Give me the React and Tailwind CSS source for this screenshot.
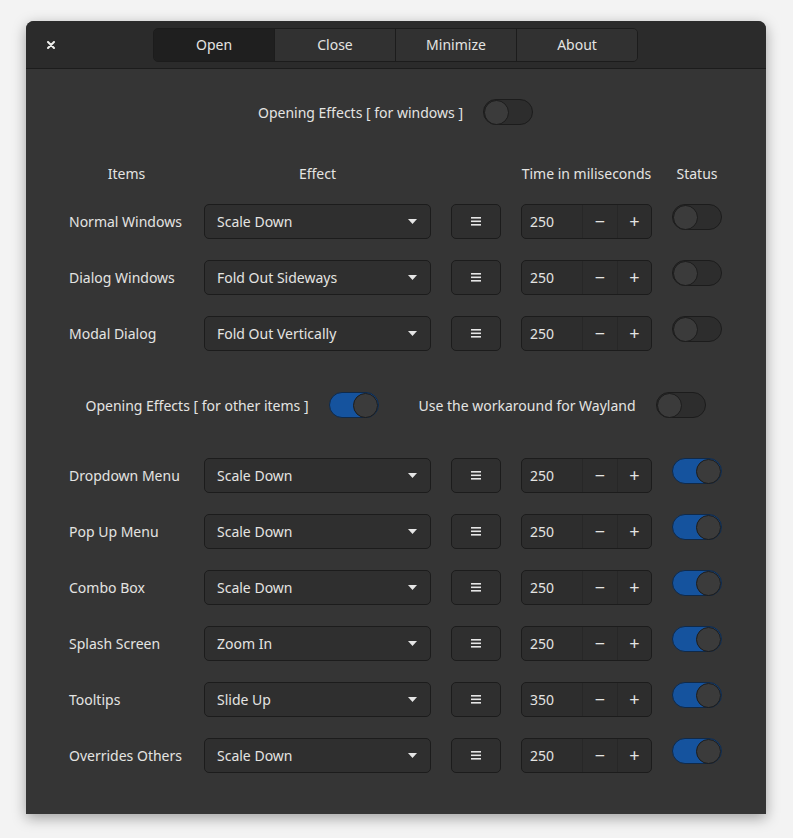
import React from 'react';

const topRows = [
  { label: 'Normal Windows', effect: 'Scale Down', time: 250, on: false },
  { label: 'Dialog Windows', effect: 'Fold Out Sideways', time: 250, on: false },
  { label: 'Modal Dialog', effect: 'Fold Out Vertically', time: 250, on: false },
];

const otherRows = [
  { label: 'Dropdown Menu', effect: 'Scale Down', time: 250, on: true },
  { label: 'Pop Up Menu', effect: 'Scale Down', time: 250, on: true },
  { label: 'Combo Box', effect: 'Scale Down', time: 250, on: true },
  { label: 'Splash Screen', effect: 'Zoom In', time: 250, on: true },
  { label: 'Tooltips', effect: 'Slide Up', time: 350, on: true },
  { label: 'Overrides Others', effect: 'Scale Down', time: 250, on: true },
];

const Switch = ({ on }) => (
  <div
    className={`w-[50px] h-[26px] rounded-full border flex items-center ${
      on ? 'bg-[#15539e] border-[#102a4a] justify-end' : 'bg-[#2d2d2d] border-[#1c1c1c] justify-start'
    }`}
  >
    <div className="w-[25px] h-[25px] rounded-full bg-[#3b3b3b] border border-[#1c1c1c]" />
  </div>
);

const MenuIcon = () => (
  <svg width="10" height="9" viewBox="0 0 10 9">
    <rect x="0" y="0" width="10" height="1.6" fill="#e6e6e6" />
    <rect x="0" y="3.5" width="10" height="1.6" fill="#e6e6e6" />
    <rect x="0" y="7" width="10" height="1.6" fill="#e6e6e6" />
  </svg>
);

const Row = ({ label, effect, time, on }) => (
  <>
    <div className="h-[35px] flex items-center whitespace-nowrap">{label}</div>
    <div className="h-[35px] flex items-center justify-between pl-3 pr-[13px] bg-[#2f2f2f] border border-[#1c1c1c] rounded-[5px]">
      <span>{effect}</span>
      <svg width="9" height="5" viewBox="0 0 9 5">
        <path d="M0 0 H9 L4.5 5 Z" fill="#e6e6e6" />
      </svg>
    </div>
    <div className="h-[35px] flex items-center justify-center bg-[#2f2f2f] border border-[#1c1c1c] rounded-[5px]">
      <MenuIcon />
    </div>
    <div className="h-[35px] flex bg-[#2d2d2d] border border-[#1c1c1c] rounded-[5px] overflow-hidden">
      <div className="w-[60px] flex items-center pl-2">{time}</div>
      <div className="w-[35px] flex items-center justify-center border-l border-[#272727] text-[18px]">−</div>
      <div className="flex-1 flex items-center justify-center border-l border-[#272727] text-[18px]">+</div>
    </div>
    <div className="h-[35px] flex items-start">
      <Switch on={on} />
    </div>
  </>
);

const tabs = ['Open', 'Close', 'Minimize', 'About'];

export default function App() {
  return (
    <div
      className="w-[793px] h-[838px] bg-[#f3f3f3] pl-[26px] pt-[21px] text-[#e4e4e2] text-[14px]"
      style={{ fontFamily: '"Noto Sans", "Open Sans", sans-serif' }}
    >
      <div className="w-[740px] h-[793px] bg-[#353535] rounded-t-[8px] shadow-[0_4px_14px_rgba(0,0,0,0.35)] overflow-hidden flex flex-col">
        {/* HEADER BAR */}
        <div className="h-[48px] shrink-0 bg-[#2b2b2b] border-b border-[#1c1c1c] flex items-center relative">
          <div className="absolute left-[21px] top-[20px]">
            <svg width="8" height="8" viewBox="0 0 8 8">
              <path d="M1 1 L7 7 M7 1 L1 7" stroke="#eeeeec" strokeWidth="2" strokeLinecap="round" />
            </svg>
          </div>
          <div className="ml-[127px] flex h-[34px] w-[485px] border border-[#1c1c1c] rounded-[5px] overflow-hidden">
            {tabs.map((t, i) => (
              <div
                key={t}
                className={`flex-1 flex items-center justify-center ${i > 0 ? 'border-l border-[#1c1c1c]' : ''} ${
                  i === 0 ? 'bg-[#1f1f1f]' : 'bg-[#313131]'
                }`}
              >
                {t}
              </div>
            ))}
          </div>
        </div>

        {/* BODY */}
        <div className="flex flex-col items-center pt-[30px] pl-[43px] pr-[44px]">
          <div className="flex items-center gap-5 h-[26px]">
            <span>Opening Effects [ for windows ]</span>
            <Switch on={false} />
          </div>

          <div className="mt-[39px] grid grid-cols-[115px_227px_50px_131px_50px] gap-x-5 gap-y-[21px]">
            <div className="h-[20px] leading-[20px] text-center -mb-px">Items</div>
            <div className="h-[20px] leading-[20px] text-center -mb-px">Effect</div>
            <div />
            <div className="h-[20px] leading-[20px] text-center whitespace-nowrap -mb-px">Time in miliseconds</div>
            <div className="h-[20px] leading-[20px] text-center -mb-px">Status</div>
            {topRows.map((r) => (
              <Row key={r.label} {...r} />
            ))}
          </div>

          <div className="mt-[41px] flex items-center h-[26px]">
            <span>Opening Effects [ for other items ]</span>
            <div className="ml-5">
              <Switch on={true} />
            </div>
            <span className="ml-10">Use the workaround for Wayland</span>
            <div className="ml-5">
              <Switch on={false} />
            </div>
          </div>

          <div className="mt-[40px] grid grid-cols-[115px_227px_50px_131px_50px] gap-x-5 gap-y-[21px]">
            {otherRows.map((r) => (
              <Row key={r.label} {...r} />
            ))}
          </div>
        </div>
      </div>
    </div>
  );
}
